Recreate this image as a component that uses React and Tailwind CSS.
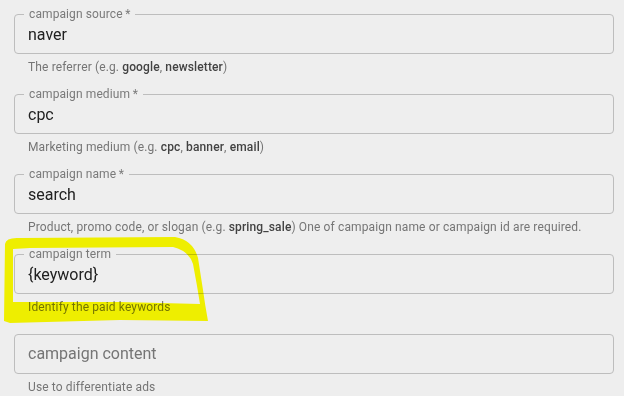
import React from "react";

const fields = [
  {
    label: "campaign source",
    required: true,
    value: "naver",
    help: (
      <>
        The referrer (e.g. <b>google</b>, <b>newsletter</b>)
      </>
    ),
  },
  {
    label: "campaign medium",
    required: true,
    value: "cpc",
    help: (
      <>
        Marketing medium (e.g. <b>cpc</b>, <b>banner</b>, <b>email</b>)
      </>
    ),
  },
  {
    label: "campaign name",
    required: true,
    value: "search",
    help: (
      <>
        Product, promo code, or slogan (e.g. <b>spring_sale</b>) One of campaign
        name or campaign id are required.
      </>
    ),
  },
  {
    label: "campaign term",
    value: "{keyword}",
    help: "Identify the paid keywords",
  },
  {
    placeholder: "campaign content",
    help: "Use to differentiate ads",
  },
];

function Field({ label, required, value, placeholder, help }) {
  return (
    <div className="mb-[17px]">
      <div className="relative h-[40px] rounded-[4px] border border-[#bdbdbd] flex items-center pl-[13px]">
        {label && (
          <span className="absolute left-[9px] -top-[9px] bg-[#eeeeee] px-[5px] text-[12px] leading-[16px] tracking-[0.1px] text-[#7a7a7a]">
            {label}
            {required && "\u2009*"}
          </span>
        )}
        {value ? (
          <span className="text-[16px] text-[#212121] leading-[20px] pt-[1px]">
            {value}
          </span>
        ) : (
          <span className="text-[16px] text-[#757575] leading-[20px]">
            {placeholder}
          </span>
        )}
      </div>
      <p className="mt-[3px] pl-[14px] text-[12px] leading-[20px] tracking-[0.13px] text-[#757575] [&_b]:font-medium [&_b]:text-[#424242]">
        {help}
      </p>
    </div>
  );
}

export default function App() {
  return (
    <div
      className="relative w-[624px] h-[396px] overflow-hidden bg-[#eeeeee]"
      style={{ fontFamily: "Roboto, 'Liberation Sans', sans-serif" }}
    >
      <div className="w-[600px] ml-[14px] pt-[14px] flex flex-col">
        {fields.map((f, i) => (
          <Field key={i} {...f} />
        ))}
      </div>

      {/* hand drawn highlight */}
      <svg
        className="absolute left-0 top-0 pointer-events-none mix-blend-multiply"
        width="624"
        height="396"
      >
        <path
          fillRule="evenodd"
          fill="#ffff00"
          d="M5 244 Q6 237 20 238 L175 237 Q193 240 198 258 L203 290 Q205 305 208 321 L120 320 L10 323 L4 321 Z
             M13 249 L13 302 L120 302 L200 304 Q197 285 193 264 Q189 251 173 247 L30 248 Z"
        />
      </svg>
    </div>
  );
}
